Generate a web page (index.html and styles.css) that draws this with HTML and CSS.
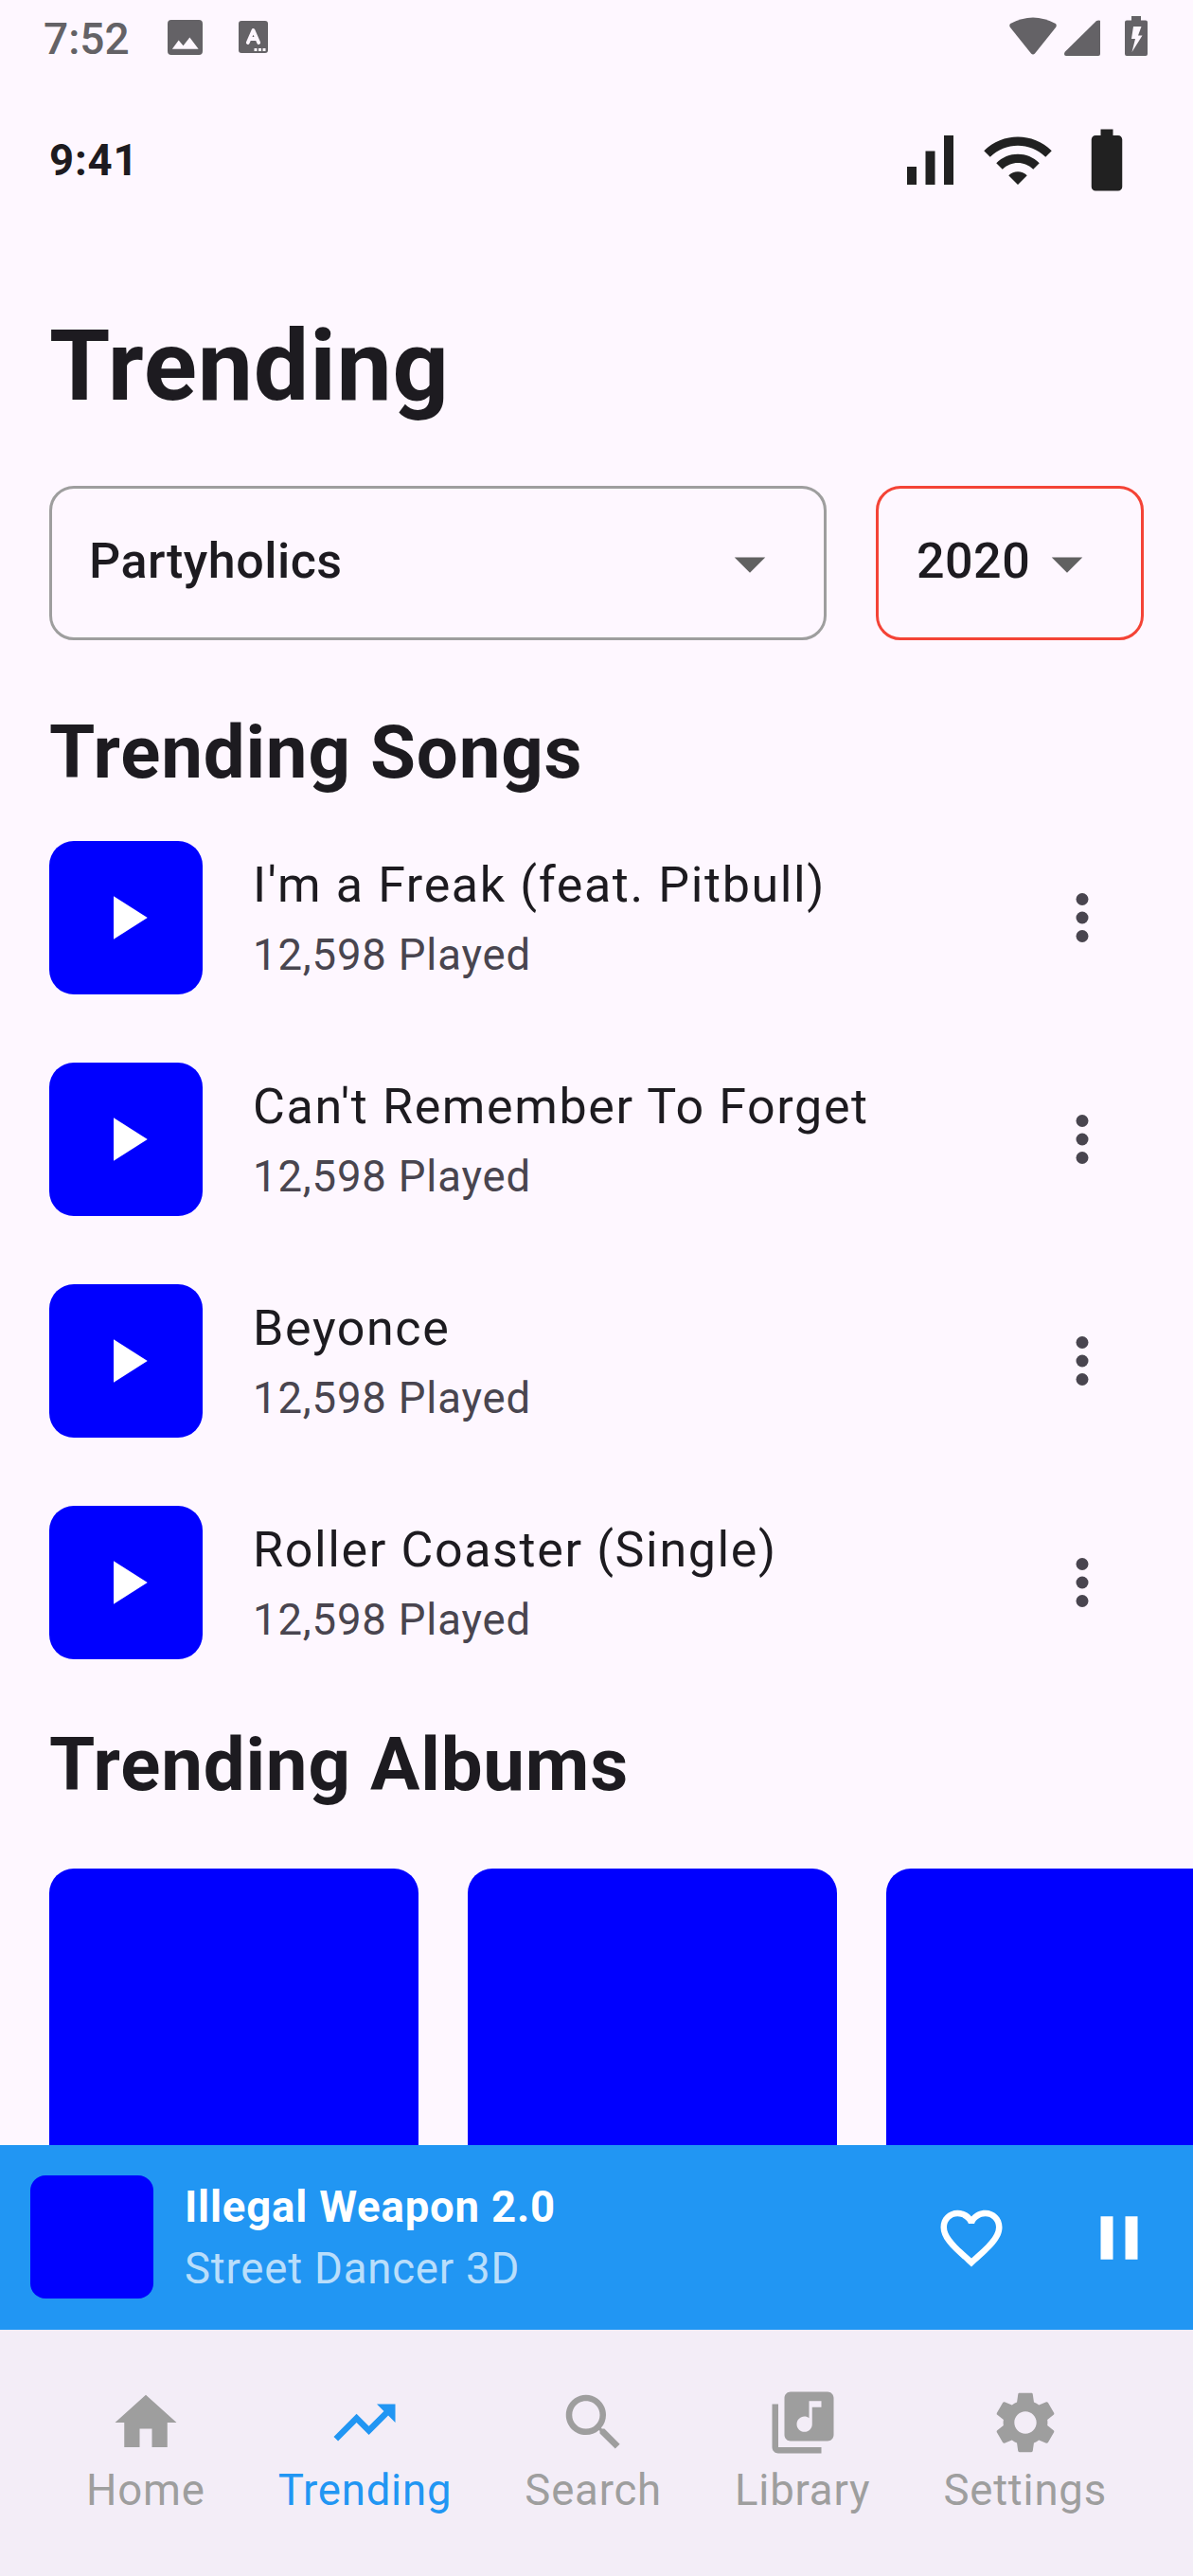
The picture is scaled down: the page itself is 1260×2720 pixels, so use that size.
FILE: index.html
```html
<!DOCTYPE html>
<html lang="en">
<head>
<meta charset="utf-8">
<title>Trending</title>
<link rel="stylesheet" href="styles.css">
</head>
<body>
<div class="screen">
  <div class="system-bar">
    <span class="system-time">7:52</span>
    <svg class="sys-image" viewBox="0 0 38 38"><path fill-rule="evenodd" d="M4 0H34Q38 0 38 4V34Q38 38 34 38H4Q0 38 0 34V4Q0 0 4 0ZM5 31.500H33.500L24 19L17 28L12 22Z"/></svg>
    <svg class="sys-keyboard" viewBox="0 0 31 34"><rect width="31" height="34" rx="3"/><path d="M9.800 23L15.500 10L21.200 23M12 19H19" fill="none" stroke="#fef7ff" stroke-width="3.800" stroke-linecap="round" stroke-linejoin="round"/><path fill="#fef7ff" d="M16.500 29h3v3h-3zM21 29h3v3h-3zM25.500 29h3v3h-3z"/></svg>
    <div class="system-right">
      <svg class="sys-wifi" viewBox="0 0 50 40"><path d="M1 7Q25-6 49 7Q50.500 9 49 11L27 38.500Q25 40.500 23 38.500L1 11Q-.5 9 1 7Z"/></svg>
      <svg class="sys-signal" viewBox="0 0 38 38"><path d="M0 36Q0 34.500 1 33.500L34 1Q36 0 38 .8V36Q38 38 36 38H2Q0 38 0 36Z"/></svg>
      <svg class="sys-battery" viewBox="0 0 24 42"><path fill-rule="evenodd" d="M7 0H17V4.500H22Q24 4.500 24 6.500V40Q24 42 22 42H2Q0 42 0 40V6.500Q0 4.500 2 4.500H7ZM9 11L7 24H11L7.500 38L18.500 20.500H14L17.500 11Z"/></svg>
    </div>
  </div>

  <header class="status-row">
    <span>9:41</span>
    <div class="status-icons">
      <svg class="bars" viewBox="0 0 49 52"><path d="M0 33H10V52H0ZM19.500 16.500H29.500V52H19.500ZM39 0H49V52H39Z"/></svg>
      <svg class="wifi" viewBox="0 0 24 24"><path d="M1 9l2 2c4.970-4.970 13.030-4.970 18 0l2-2C16.930 2.930 7.080 2.930 1 9zm8 8l3 3 3-3c-1.650-1.660-4.340-1.660-6 0zm-4-4l2 2c2.760-2.760 7.240-2.760 10 0l2-2C15.140 9.140 8.870 9.140 5 13z"/></svg>
      <svg class="battery" viewBox="0 0 24 24"><path d="M15.670 4H14V2h-4v2H8.330C7.600 4 7 4.600 7 5.330v15.330C7 21.400 7.600 22 8.330 22h7.330c.74 0 1.340-.6 1.340-1.330V5.330C17 4.600 16.400 4 15.670 4z"/></svg>
    </div>
  </header>

  <main class="content">
    <h1>Trending</h1>
    <div class="filters">
      <div class="select select-genre"><span>Partyholics</span><svg class="icon" viewBox="0 0 24 24"><path d="M7 10l5 5 5-5z"/></svg></div>
      <div class="select select-year"><span>2020</span><svg class="icon" viewBox="0 0 24 24"><path d="M7 10l5 5 5-5z"/></svg></div>
    </div>

    <h2 class="songs-heading">Trending Songs</h2>
    <ul class="songs">
      <li class="song">
        <div class="cover"><svg class="icon" viewBox="0 0 24 24"><path d="M8 5v14l11-7z"/></svg></div>
        <div class="song-text"><div class="song-title">I'm a Freak (feat. Pitbull)</div><div class="song-plays">12,598 Played</div></div>
        <svg class="icon more" viewBox="0 0 24 24"><circle cx="12" cy="6" r="2"/><circle cx="12" cy="12" r="2"/><circle cx="12" cy="18" r="2"/></svg>
      </li>
      <li class="song">
        <div class="cover"><svg class="icon" viewBox="0 0 24 24"><path d="M8 5v14l11-7z"/></svg></div>
        <div class="song-text"><div class="song-title">Can't Remember To Forget</div><div class="song-plays">12,598 Played</div></div>
        <svg class="icon more" viewBox="0 0 24 24"><circle cx="12" cy="6" r="2"/><circle cx="12" cy="12" r="2"/><circle cx="12" cy="18" r="2"/></svg>
      </li>
      <li class="song">
        <div class="cover"><svg class="icon" viewBox="0 0 24 24"><path d="M8 5v14l11-7z"/></svg></div>
        <div class="song-text"><div class="song-title">Beyonce</div><div class="song-plays">12,598 Played</div></div>
        <svg class="icon more" viewBox="0 0 24 24"><circle cx="12" cy="6" r="2"/><circle cx="12" cy="12" r="2"/><circle cx="12" cy="18" r="2"/></svg>
      </li>
      <li class="song">
        <div class="cover"><svg class="icon" viewBox="0 0 24 24"><path d="M8 5v14l11-7z"/></svg></div>
        <div class="song-text"><div class="song-title">Roller Coaster (Single)</div><div class="song-plays">12,598 Played</div></div>
        <svg class="icon more" viewBox="0 0 24 24"><circle cx="12" cy="6" r="2"/><circle cx="12" cy="12" r="2"/><circle cx="12" cy="18" r="2"/></svg>
      </li>
    </ul>

    <h2 class="albums-heading">Trending Albums</h2>
    <div class="albums"><div class="album"></div><div class="album"></div><div class="album"></div></div>
  </main>

  <section class="player">
    <div class="player-cover"></div>
    <div class="player-text"><div class="player-title">Illegal Weapon 2.0</div><div class="player-artist">Street Dancer 3D</div></div>
    <svg class="icon" viewBox="0 0 24 24"><path d="M16.500 3c-1.740 0-3.410.81-4.500 2.090C10.910 3.810 9.240 3 7.500 3 4.420 3 2 5.420 2 8.500c0 3.780 3.400 6.860 8.550 11.540L12 21.350l1.450-1.320C18.600 15.360 22 12.280 22 8.500 22 5.420 19.580 3 16.500 3zm-4.400 15.550l-.1.100-.1-.1C7.140 14.240 4 11.390 4 8.500 4 6.500 5.500 5 7.500 5c1.540 0 3.040.99 3.570 2.360h1.870C13.460 5.990 14.960 5 16.500 5c2 0 3.500 1.500 3.500 3.500 0 2.890-3.140 5.740-7.900 10.050z"/></svg>
    <svg class="icon pause" viewBox="0 0 24 24"><path d="M6 19h4V5H6v14zm8-14v14h4V5h-4z"/></svg>
  </section>

  <nav class="tabs">
    <a class="tab"><svg class="icon" viewBox="0 0 24 24"><path d="M10 20v-6h4v6h5v-8h3L12 3 2 12h3v8z"/></svg><span>Home</span></a>
    <a class="tab active"><svg class="icon" viewBox="0 0 24 24"><path d="M16 6l2.290 2.290-4.880 4.880-4-4L2 16.590 3.410 18l6-6 4 4 6.300-6.290L22 12V6z"/></svg><span>Trending</span></a>
    <a class="tab"><svg class="icon" viewBox="0 0 24 24"><path d="M15.500 14h-.79l-.28-.27C15.410 12.590 16 11.110 16 9.500 16 5.910 13.090 3 9.500 3S3 5.910 3 9.500 5.910 16 9.500 16c1.610 0 3.090-.59 4.230-1.570l.27.28v.79l5 4.990L20.490 19l-4.990-5zm-6 0C7.010 14 5 11.990 5 9.500S7.010 5 9.500 5 14 7.010 14 9.500 11.990 14 9.500 14z"/></svg><span>Search</span></a>
    <a class="tab"><svg class="icon" viewBox="0 0 24 24"><path d="M20 2H8c-1.100 0-2 .9-2 2v12c0 1.100.9 2 2 2h12c1.100 0 2-.9 2-2V4c0-1.100-.9-2-2-2zm-2 5h-3v5.500c0 1.380-1.120 2.500-2.500 2.500S10 13.880 10 12.500s1.120-2.500 2.500-2.500c.57 0 1.080.19 1.500.51V5h4v2zM4 6H2v14c0 1.100.9 2 2 2h14v-2H4V6z"/></svg><span>Library</span></a>
    <a class="tab"><svg class="icon" viewBox="0 0 24 24"><path d="M19.140 12.940c.04-.3.060-.61.060-.94 0-.32-.02-.64-.07-.94l2.030-1.580c.18-.14.230-.41.120-.61l-1.920-3.320c-.12-.22-.37-.29-.59-.22l-2.390.96c-.5-.38-1.030-.7-1.620-.94l-.36-2.540c-.04-.24-.24-.41-.48-.41h-3.840c-.24 0-.43.170-.47.410l-.36 2.540c-.59.240-1.130.570-1.620.940l-2.390-.96c-.22-.08-.47 0-.59.220L2.740 8.870c-.12.210-.08.470.12.610l2.030 1.580c-.05.300-.09.630-.09.940s.02.640.07.940l-2.030 1.580c-.18.140-.23.410-.12.610l1.920 3.320c.12.220.370.290.590.220l2.390-.96c.5.380 1.030.700 1.620.940l.36 2.540c.05.240.240.410.480.410h3.840c.24 0 .44-.17.470-.41l.36-2.540c.59-.24 1.130-.56 1.620-.94l2.390.96c.22.080.47 0 .59-.22l1.920-3.320c.12-.22.070-.47-.12-.61l-2.010-1.580zM12 15.600c-1.980 0-3.600-1.620-3.600-3.600s1.620-3.600 3.600-3.600 3.600 1.620 3.600 3.600-1.620 3.600-3.600 3.600z"/></svg><span>Settings</span></a>
  </nav>
</div>
</body>
</html>
```

FILE: styles.css
```css
* { box-sizing: border-box; }

body {
  margin: 0;
  background: #fef7ff;
  color: #1d1b20;
  font-family: Roboto, sans-serif;
}

h1, h2, ul { margin: 0; padding: 0; }
svg { display: block; flex: none; fill: currentColor; }
.icon { width: 78px; height: 78px; }

.screen {
  display: flex;
  flex-direction: column;
  width: 1260px;
  height: 2720px;
  overflow: hidden;
}

/* Device status bar */
.system-bar {
  display: flex;
  align-items: flex-start;
  flex: none;
  height: 130px;
  padding-left: 46px;
  padding-right: 48px;
  color: #646266;
}
.system-time { width: 130.5px; padding-top: 13px; font-size: 46px; line-height: 56px; font-weight: 500; }
.sys-image { width: 37px; height: 37px; margin-top: 20.5px; }
.sys-keyboard { width: 31px; height: 34px; margin: 22px 0 0 38px; }
.system-right { display: flex; margin-left: auto; }
.sys-wifi { width: 50px; height: 40px; margin-top: 18px; }
.sys-signal { width: 38px; height: 38px; margin: 21px 0 0 8px; }
.sys-battery { width: 24px; height: 42px; margin: 17px 0 0 26px; }

/* In-app status row */
.status-row {
  display: flex;
  flex: none;
  align-items: center;
  justify-content: space-between;
  height: 78px;
  padding: 0 52px;
  font-size: 45.5px;
  line-height: 65px;
  font-weight: 700;
  letter-spacing: 0.8125px;
}
.status-icons { display: flex; align-items: center; color: #212121; }
.bars { width: 49px; height: 52px; margin-right: 29px; }
.wifi { width: 78px; height: 78px; margin-right: 16px; }
.battery { width: 78px; height: 78px; }

.content { flex: 1; min-height: 0; padding-left: 52px; overflow: hidden; }
h1, h2 { font-weight: 700; letter-spacing: 0.8125px; }
h1 { padding-top: 114px; font-size: 104px; line-height: 130px; }
h2 { font-size: 78px; line-height: 104px; }

.filters { display: flex; gap: 52px; margin: 61px 52px 0 0; }
.select {
  display: flex;
  align-items: center;
  justify-content: space-between;
  height: 163px;
  padding: 0 39px;
  border: 3px solid #9e9e9e;
  border-radius: 26px;
  font-size: 52px;
  line-height: 78px;
  font-weight: 500;
  letter-spacing: 0.4875px;
}
.select span { padding-bottom: 3px; }
.select .icon { color: #616161; }
.select-genre { flex: 1; }
.select-year { width: 283px; padding-left: 40px; border-color: #f44336; }

.songs-heading { margin-top: 67px; }
.songs { margin-top: 41px; list-style: none; }
.song { display: flex; align-items: center; height: 162px; margin-bottom: 72px; }
.cover {
  display: flex;
  align-items: center;
  justify-content: center;
  width: 162px;
  height: 162px;
  margin-right: 53px;
  border-radius: 26px;
  background: #0000ff;
  color: #fff;
}
.song-title { margin-bottom: 4px; font-size: 52px; line-height: 74px; letter-spacing: 1.625px; }
.song-plays { font-size: 45.5px; line-height: 65px; letter-spacing: 0.8125px; color: #49454f; }
.more { margin: 0 78px 0 auto; color: #49454f; }

.albums-heading { margin-top: -12px; }
.albums { display: flex; gap: 52px; margin-top: 57px; }
.album { flex: none; width: 390px; height: 390px; border-radius: 26px; background: #0000ff; }

.player {
  display: flex;
  flex: none;
  align-items: center;
  height: 195px;
  padding: 0 39px 0 32px;
  background: #2196f3;
  color: #fff;
}
.player-cover { width: 130px; height: 130px; margin: 0 33px 1px 0; border-radius: 16px; background: #0000ff; }
.player-text { flex: 1; font-size: 45.5px; line-height: 65px; letter-spacing: 0.8125px; }
.player-title { font-weight: 700; }
.player-artist { color: rgba(255, 255, 255, 0.7); }
.pause { margin-left: 78px; }

.tabs {
  display: flex;
  flex: none;
  justify-content: center;
  gap: 77px;
  height: 260px;
  padding-top: 59px;
  background: #f3edf7;
  color: #9e9e9e;
}
.tab { display: flex; flex-direction: column; align-items: center; font-size: 45.5px; line-height: 65px; letter-spacing: 0.8125px; }
.active { color: #2196f3; }
```
